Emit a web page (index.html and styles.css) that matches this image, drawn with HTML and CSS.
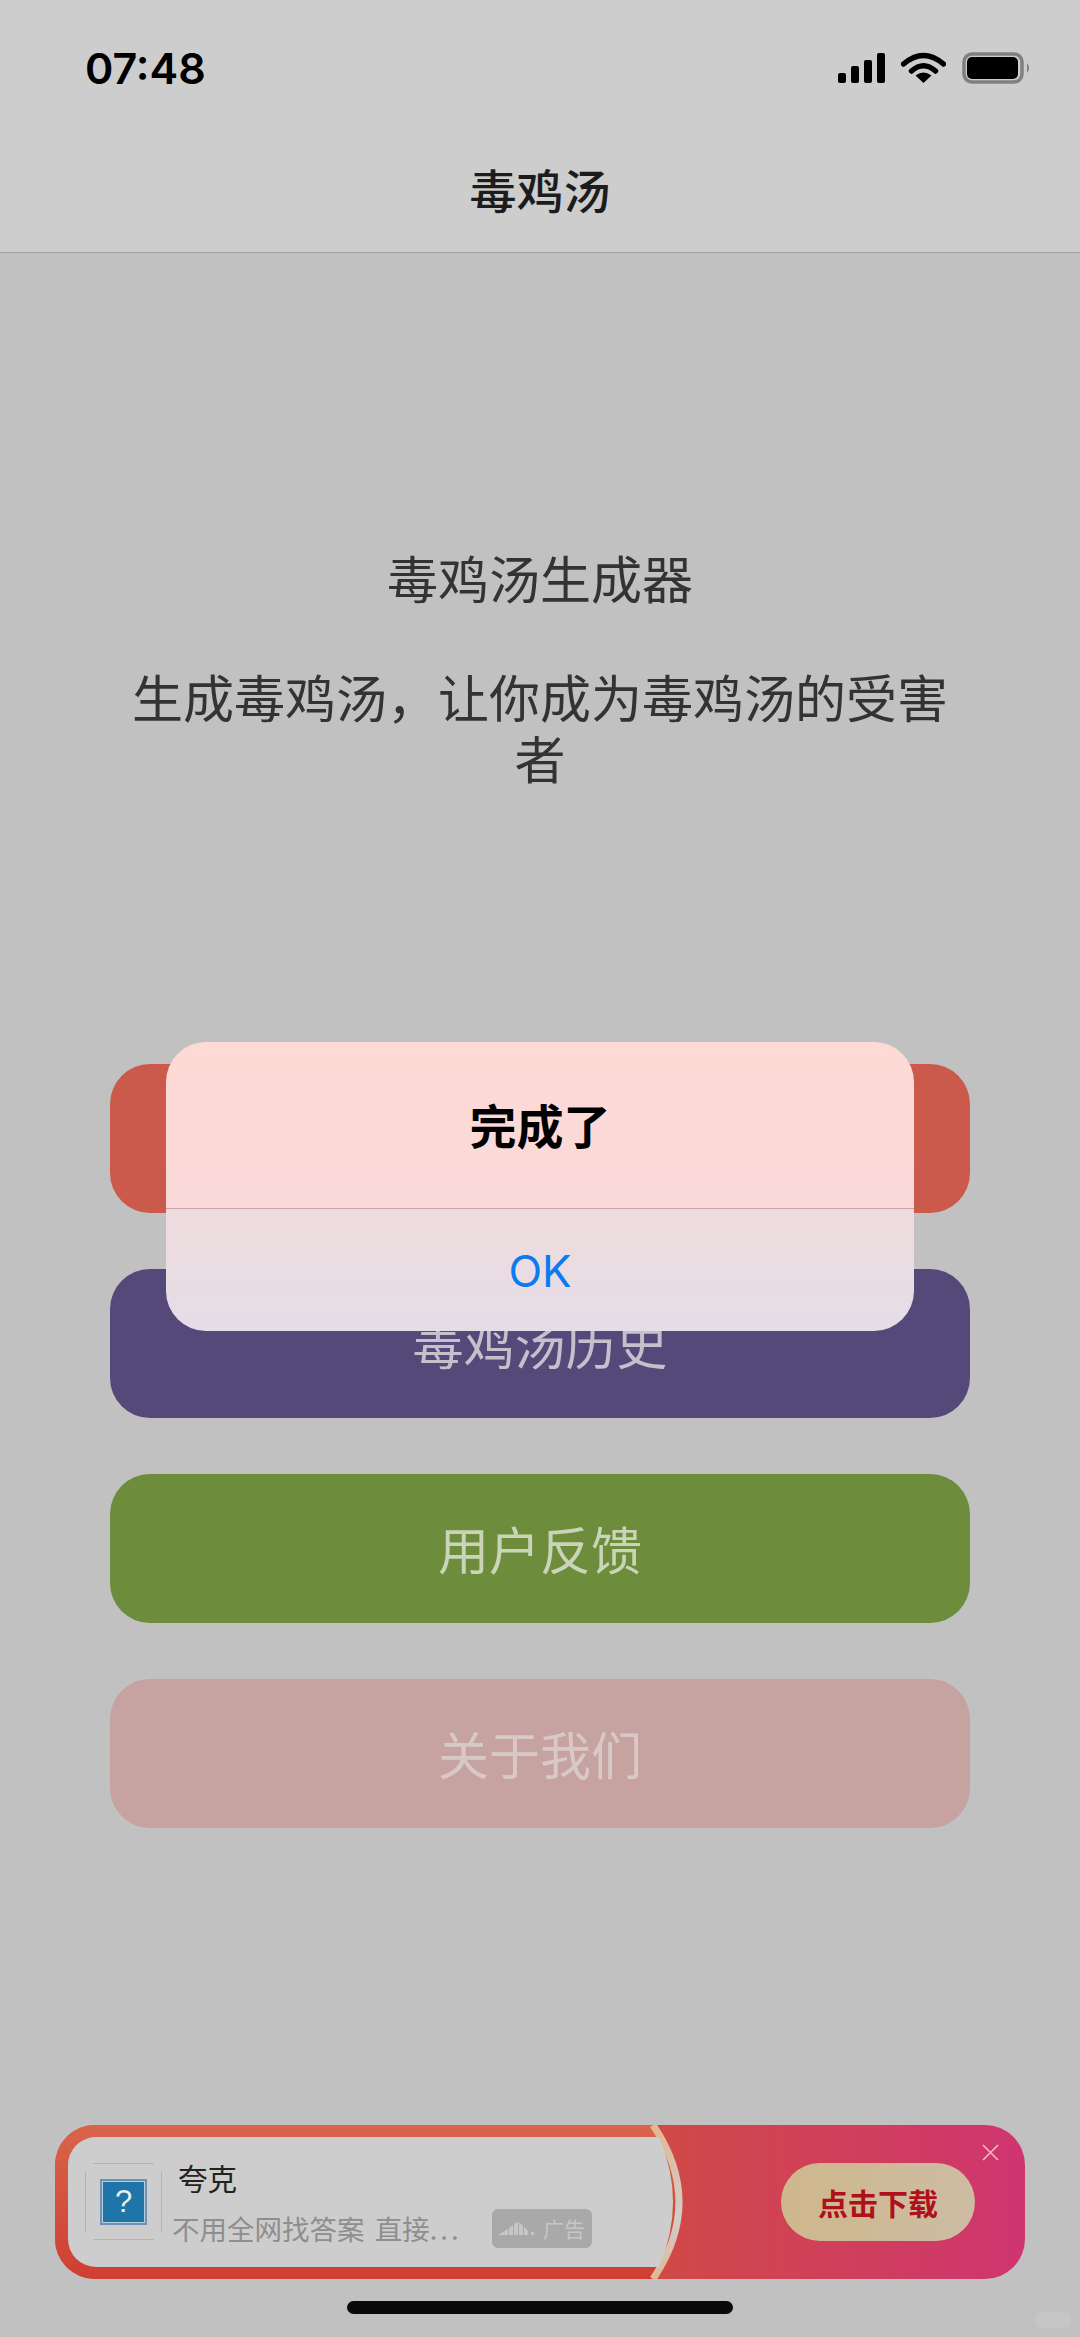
FILE: index.html
```html
<!DOCTYPE html>
<html lang="zh">
<head>
    <meta charset="UTF-8">
    <meta name="viewport" content="width=device-width, initial-scale=1.0">
    <title>毒鸡汤</title>
    <link rel="stylesheet" href="styles.css">
</head>
<body>
    <div class="screen">
        <header class="header">
            <div class="status">
                <span class="time">07:48</span>
                <div class="status-icons">
                    <svg class="signal" width="48" height="30" viewBox="0 0 48 30">
                        <rect x="0" y="20" width="8" height="10" rx="2"/>
                        <rect x="13" y="13" width="8" height="17" rx="2"/>
                        <rect x="26" y="7" width="8" height="23" rx="2"/>
                        <rect x="39" y="0" width="8" height="30" rx="2"/>
                    </svg>
                    <svg class="wifi" width="45" height="31" viewBox="0 0 45 31">
                        <path d="M2.5 12 Q22.5 -5 42.5 12" fill="none" stroke="#000" stroke-width="5.5" stroke-linecap="round"/>
                        <path d="M10.5 19 Q22.5 8.5 34.5 19" fill="none" stroke="#000" stroke-width="5.5" stroke-linecap="round"/>
                        <path d="M22.5 31 L14.5 23.5 Q22.5 17.5 30.5 23.5 Z"/>
                    </svg>
                    <svg class="battery" width="69" height="32" viewBox="0 0 69 32">
                        <rect x="2" y="2" width="58" height="28" rx="8" fill="none" stroke="#808080" stroke-width="3.5"/>
                        <rect x="5" y="5" width="51" height="22" rx="5"/>
                        <path d="M65 11 Q69 16 65 21 Z" fill="#808080"/>
                    </svg>
                </div>
            </div>
            <div class="nav-title">毒鸡汤</div>
        </header>

        <main class="content">
            <div class="intro">
                <p class="intro-title">毒鸡汤生成器</p>
                <p class="intro-text">生成毒鸡汤，让你成为毒鸡汤的受害者</p>
            </div>
            <div class="menu">
                <button class="menu-btn btn-red"></button>
                <button class="menu-btn btn-purple">毒鸡汤历史</button>
                <button class="menu-btn btn-green">用户反馈</button>
                <button class="menu-btn btn-pink">关于我们</button>
            </div>
        </main>

        <footer class="footer">
            <div class="ad">
                <svg class="ad-shape" width="970" height="154" viewBox="0 0 970 154">
                    <defs>
                        <linearGradient id="bandFill" x1="0" y1="0" x2="0" y2="1">
                            <stop offset="0" stop-color="#d8654b"/>
                            <stop offset="1" stop-color="#cf3e33"/>
                        </linearGradient>
                        <linearGradient id="bandEdge" x1="0" y1="0" x2="0" y2="1">
                            <stop offset="0" stop-color="#e2b795"/>
                            <stop offset="0.6" stop-color="#d2cdc8"/>
                            <stop offset="1" stop-color="#e2b795"/>
                        </linearGradient>
                    </defs>
                    <path d="M0 0 H598 Q650 77 598 154 H0 Z" fill="url(#bandFill)"/>
                    <path d="M598 0 Q650 77 598 154" fill="none" stroke="url(#bandEdge)" stroke-width="7"/>
                    <path d="M41 12 H604 Q632 77 604 142 H41 A28 28 0 0 1 13 114 V40 A28 28 0 0 1 41 12 Z" fill="#cdcdcd"/>
                </svg>
                <div class="ad-icon">
                    <div class="broken-img"><span>?</span></div>
                </div>
                <div class="ad-info">
                    <div class="ad-name">夸克</div>
                    <div class="ad-row">
                        <span class="ad-desc">不用全网找答案 直接<span class="ad-dots">...</span></span>
                        <span class="ad-tag">
                            <svg width="36" height="15" viewBox="0 0 36 15">
                                <path d="M0 14 L10 8 V14 Z M11 7 L15 4 V14 H11 Z M16 3 L20 1 V14 H16 Z M21 1 L25 5 V14 H21 Z M26 6 L30 10 V14 H26 Z M33 11 H36 V14 H33 Z"/>
                            </svg>
                            广告
                        </span>
                    </div>
                </div>
                <button class="ad-btn">点击下载</button>
                <svg class="ad-close" width="17" height="17" viewBox="0 0 17 17">
                    <path d="M1 1 L16 16 M16 1 L1 16" stroke="#f0b9c4" stroke-width="1.6" fill="none"/>
                </svg>
            </div>
            <div class="home-bar"></div>
        </footer>

        <div class="dialog">
            <div class="dialog-title">完成了</div>
            <div class="dialog-ok">OK</div>
        </div>
        <div class="watermark"></div>
    </div>
</body>
</html>
```

FILE: styles.css
```css
* {
    box-sizing: border-box;
}
body {
    margin: 0;
    background-color: #c1c1c1;
    font-family: "Noto Sans CJK SC", "Noto Sans", sans-serif;
}
p {
    margin: 0;
}
button {
    border: none;
    font-family: inherit;
    padding: 0;
}
.screen {
    position: relative;
    width: 1080px;
    height: 2337px;
    display: flex;
    flex-direction: column;
    overflow: hidden;
    background-color: #c1c1c1;
}

/* top bar */
.header {
    height: 253px;
    background-color: #cdcdcd;
    border-bottom: 1px solid #a2a2a2;
}
.status {
    height: 130px;
    padding: 44px 49px 0 85px;
    display: flex;
    justify-content: space-between;
    align-items: flex-start;
}
.time {
    font-family: Inter, sans-serif;
    font-size: 43px;
    font-weight: 600;
    line-height: 48px;
    color: #000;
}
.status-icons {
    display: flex;
    align-items: flex-start;
    margin-top: 8px;
}
.signal {
    margin-top: 1px;
}
.wifi {
    margin-left: 15px;
}
.battery {
    margin-left: 16px;
}
.nav-title {
    height: 122px;
    padding-top: 29px;
    text-align: center;
    font-size: 47px;
    font-weight: 500;
    line-height: 60px;
    color: #1c1c1c;
}

/* middle */
.content {
    padding: 294px 110px 0;
}
.intro {
    text-align: center;
    font-size: 51px;
    line-height: 61px;
    color: #333;
}
.intro-title {
    margin-bottom: 58px;
}
.menu {
    margin-top: 276px;
    display: flex;
    flex-direction: column;
    gap: 56px;
}
.menu-btn {
    height: 149px;
    border-radius: 40px;
    font-size: 51px;
    line-height: 61px;
}
.btn-red {
    background-color: #cc5a4c;
}
.btn-purple {
    background-color: #55497a;
    color: #c4c0cc;
}
.btn-green {
    background-color: #6d8c3c;
    color: #c9d4b8;
}
.btn-pink {
    background-color: #c6a2a0;
    color: #d8c8c6;
}

/* ad banner */
.footer {
    margin-top: auto;
    padding-bottom: 23px;
}
.ad {
    position: relative;
    height: 154px;
    margin: 0 55px;
    padding: 38px 50px 0 30px;
    display: flex;
    align-items: flex-start;
    border-radius: 40px;
    overflow: hidden;
    background: linear-gradient(90deg, #d14a44 60%, #cf3570 100%);
}
.ad-shape {
    position: absolute;
    left: 0;
    top: 0;
}
.ad-icon {
    position: relative;
    width: 77px;
    height: 77px;
    display: flex;
    align-items: center;
    justify-content: center;
}
.ad-icon::before {
    content: "";
    position: absolute;
    top: 0;
    bottom: 0;
    left: 8px;
    right: 8px;
    border-top: 1px solid #b4b4b4;
    border-bottom: 1px solid #b4b4b4;
}
.ad-icon::after {
    content: "";
    position: absolute;
    top: 8px;
    bottom: 8px;
    left: 0;
    right: 0;
    border-left: 1px solid #b4b4b4;
    border-right: 1px solid #b4b4b4;
}
.broken-img {
    width: 45px;
    height: 44px;
    background-color: #1f74a8;
    border: 2px solid #b6d0e0;
    outline: 2px solid #6f92b4;
    outline-offset: -1px;
    display: flex;
    align-items: center;
    justify-content: center;
}
.broken-img span {
    font-family: "Liberation Sans", sans-serif;
    font-size: 31px;
    line-height: 32px;
    color: #e8f0f4;
}
.ad-info {
    position: relative;
    margin-left: 10px;
}
.ad-name {
    padding-left: 6px;
    font-size: 29.5px;
    line-height: 30px;
    color: #222;
    margin-top: -1px;
}
.ad-row {
    margin-top: 16px;
    display: flex;
    align-items: center;
}
.ad-desc {
    width: 320px;
    font-size: 27.5px;
    line-height: 40px;
    color: #8e8e8e;
    white-space: nowrap;
    word-spacing: 4px;
}
.ad-dots {
    letter-spacing: 3px;
}
.ad-tag {
    width: 100px;
    height: 39px;
    display: flex;
    align-items: center;
    gap: 9px;
    padding-left: 6px;
    border-radius: 6px;
    background-color: #a9a9a9;
    font-size: 21px;
    color: #c6c6c6;
}
.ad-tag svg {
    fill: #c6c6c6;
}
.ad-btn {
    position: relative;
    margin-left: auto;
    width: 194px;
    height: 78px;
    border-radius: 39px;
    background: linear-gradient(90deg, #cfb78c, #cdbca3);
    font-size: 30px;
    font-weight: 700;
    color: #b0101c;
}
.ad-close {
    position: absolute;
    left: 927px;
    top: 19px;
}
.home-bar {
    width: 386px;
    height: 13px;
    margin: 22px auto 0;
    border-radius: 7px;
    background-color: #0a0a0a;
}

/* alert on top */
.dialog {
    position: absolute;
    left: 166px;
    top: 1042px;
    width: 748px;
    height: 289px;
    border-radius: 40px;
    overflow: hidden;
    background: linear-gradient(180deg, #fedad5 0%, #f9d9d9 57%, #efdcde 58%, #e4dde7 100%);
    text-align: center;
}
.dialog-title {
    height: 167px;
    padding-top: 52px;
    border-bottom: 1px solid #c9a6a6;
    font-size: 47px;
    font-weight: 700;
    line-height: 60px;
    color: #000;
}
.dialog-ok {
    padding-top: 34px;
    font-family: Inter, sans-serif;
    font-size: 44px;
    line-height: 56px;
    color: #0a7bf0;
}
.watermark {
    position: absolute;
    left: 1036px;
    top: 2312px;
    width: 35px;
    height: 16px;
    border-radius: 6px;
    background-color: #c6c6c6;
}
```
